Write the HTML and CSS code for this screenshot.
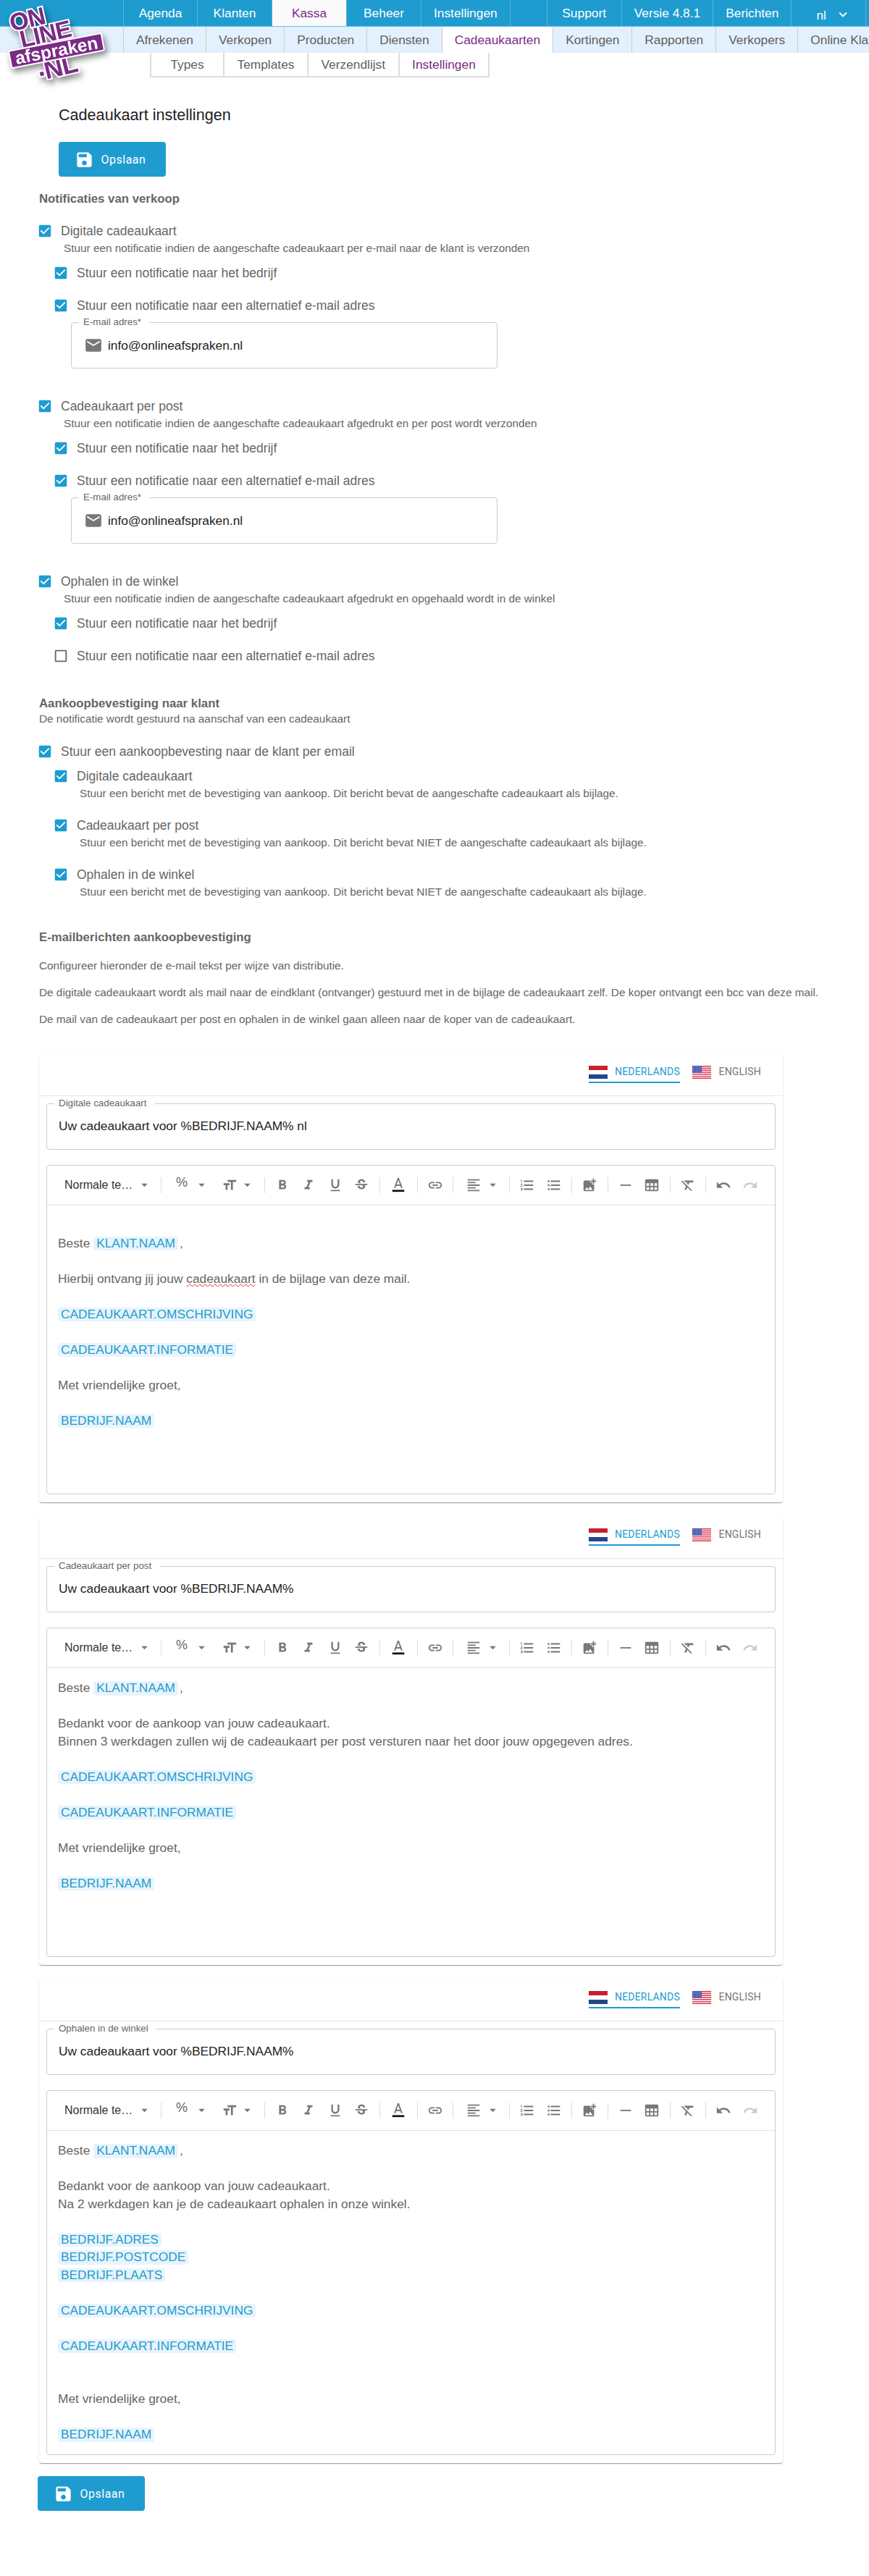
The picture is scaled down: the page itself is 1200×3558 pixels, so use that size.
FILE: index.html
```html
<!DOCTYPE html>
<html lang="nl">
<head>
  <meta charset="UTF-8">
  <title>Cadeaukaart instellingen</title>
  <link rel="stylesheet" href="styles.css">
</head>
<body>

  <!-- Icon sprite -->
  <svg class="sprite" xmlns="http://www.w3.org/2000/svg">
    <symbol id="i-save" viewBox="0 0 24 24"><path d="M17 3H5c-1.11 0-2 .9-2 2v14c0 1.1.89 2 2 2h14c1.1 0 2-.9 2-2V7l-4-4zm-5 16c-1.66 0-3-1.34-3-3s1.34-3 3-3 3 1.34 3 3-1.34 3-3 3zm3-10H5V5h10v4z"/></symbol>
    <symbol id="i-mail" viewBox="0 0 24 24"><path d="M20 4H4c-1.1 0-1.99.9-1.99 2L2 18c0 1.1.9 2 2 2h16c1.1 0 2-.9 2-2V6c0-1.1-.9-2-2-2zm0 4l-8 5-8-5V6l8 5 8-5v2z"/></symbol>
    <symbol id="i-check" viewBox="0 0 24 24"><path d="M19 3H5c-1.11 0-2 .9-2 2v14c0 1.1.89 2 2 2h14c1.1 0 2-.9 2-2V5c0-1.11-.89-2-2-2zm-9 14l-5-5 1.41-1.41L10 14.17l7.59-7.59L19 8l-9 9z"/></symbol>
    <symbol id="i-uncheck" viewBox="0 0 24 24"><path d="M19 5v14H5V5h14m0-2H5c-1.1 0-2 .9-2 2v14c0 1.1.9 2 2 2h14c1.1 0 2-.9 2-2V5c0-1.1-.9-2-2-2z"/></symbol>
    <symbol id="i-caret" viewBox="6 9 12 7"><path d="M7 10l5 5 5-5z"/></symbol>
    <symbol id="i-size" viewBox="0 0 24 24"><path d="M9 4v3h5v12h3V7h5V4H9zm-6 8h3v7h3v-7h3V9H3v3z"/></symbol>
    <symbol id="i-bold" viewBox="0 0 24 24"><path d="M15.6 10.79c.97-.67 1.65-1.77 1.65-2.79 0-2.26-1.75-4-4-4H7v14h7.04c2.09 0 3.71-1.7 3.71-3.79 0-1.52-.86-2.82-2.15-3.42zM10 6.5h3c.83 0 1.5.67 1.5 1.5s-.67 1.5-1.5 1.5h-3v-3zm3.5 9H10v-3h3.5c.83 0 1.5.67 1.5 1.5s-.67 1.5-1.5 1.5z"/></symbol>
    <symbol id="i-italic" viewBox="0 0 24 24"><path d="M10 4v3h2.21l-3.42 8H6v3h8v-3h-2.21l3.42-8H18V4z"/></symbol>
    <symbol id="i-under" viewBox="0 0 24 24"><path d="M12 17c3.31 0 6-2.69 6-6V3h-2.5v8c0 1.93-1.57 3.5-3.5 3.5S8.5 12.93 8.5 11V3H6v8c0 3.31 2.69 6 6 6zm-7 2v2h14v-2H5z"/></symbol>
    <symbol id="i-strike" viewBox="0 0 24 24"><path d="M7.24 8.75c-.26-.48-.39-1.03-.39-1.67 0-.61.13-1.16.4-1.67.26-.5.63-.93 1.11-1.29.48-.35 1.05-.63 1.7-.83.66-.19 1.39-.29 2.18-.29.81 0 1.54.11 2.21.34.66.22 1.23.54 1.69.94.47.4.83.88 1.08 1.43.25.55.38 1.15.38 1.81h-3.01c0-.31-.05-.59-.15-.85-.09-.27-.24-.49-.44-.68-.2-.19-.45-.33-.75-.44-.3-.1-.66-.16-1.06-.16-.39 0-.74.04-1.03.13-.29.09-.53.21-.72.36-.19.16-.34.34-.44.55-.1.21-.15.43-.15.66 0 .48.25.88.74 1.21.38.25.77.48 1.41.7H7.39c-.05-.08-.11-.17-.15-.25zM21 12v-2H3v2h9.62c.18.07.4.14.55.2.37.17.66.34.87.51.21.17.35.36.43.57.07.2.11.43.11.69 0 .23-.05.45-.14.66-.09.2-.23.38-.42.53-.19.15-.42.26-.71.35-.29.08-.63.13-1.01.13-.43 0-.83-.04-1.18-.13s-.66-.23-.91-.42c-.25-.19-.45-.44-.59-.75-.14-.31-.25-.76-.25-1.21H6.4c0 .55.08 1.13.24 1.58.16.45.37.85.65 1.21.28.35.6.66.98.92.37.26.78.48 1.22.65.44.17.9.3 1.38.39.48.08.96.13 1.44.13.8 0 1.53-.09 2.18-.28s1.21-.45 1.67-.79c.46-.34.82-.77 1.07-1.27s.38-1.07.38-1.71c0-.6-.1-1.14-.31-1.61-.05-.11-.11-.23-.17-.33H21z"/></symbol>
    <symbol id="i-color" viewBox="0 0 24 24"><path d="M11 1L5.5 16h2.25l1.12-3h6.25l1.12 3h2.25L13 1h-2zm-1.38 10L12 4.2l2.38 6.8H9.62z"/><path fill="#111" d="M3 19h18v3H3z"/></symbol>
    <symbol id="i-link" viewBox="0 0 24 24"><path d="M3.9 12c0-1.71 1.39-3.1 3.1-3.1h4V7H7c-2.76 0-5 2.24-5 5s2.24 5 5 5h4v-1.9H7c-1.71 0-3.1-1.39-3.1-3.1zM8 13h8v-2H8v2zm9-6h-4v1.9h4c1.71 0 3.1 1.39 3.1 3.1s-1.39 3.1-3.1 3.1h-4V17h4c2.76 0 5-2.24 5-5s-2.24-5-5-5z"/></symbol>
    <symbol id="i-align" viewBox="0 0 24 24"><path d="M15 15H3v2h12v-2zm0-8H3v2h12V7zM3 13h18v-2H3v2zm0 8h18v-2H3v2zM3 3v2h18V3H3z"/></symbol>
    <symbol id="i-ol" viewBox="0 0 24 24"><path d="M2 17h2v.5H3v1h1v.5H2v1h3v-4H2v1zm1-9h1V4H2v1h1v3zm-1 3h1.8L2 13.1v.9h3v-1H3.2L5 10.9V10H2v1zm5-6v2h14V5H7zm0 14h14v-2H7v2zm0-6h14v-2H7v2z"/></symbol>
    <symbol id="i-ul" viewBox="0 0 24 24"><path d="M4 10.5c-.83 0-1.5.67-1.5 1.5s.67 1.5 1.5 1.5 1.5-.67 1.5-1.5-.67-1.5-1.5-1.5zm0-6c-.83 0-1.5.67-1.5 1.5S3.17 7.5 4 7.5 5.5 6.83 5.5 6 4.83 4.5 4 4.5zm0 12c-.83 0-1.5.68-1.5 1.5s.68 1.5 1.5 1.5 1.5-.68 1.5-1.5-.67-1.5-1.5-1.5zM7 19h14v-2H7v2zm0-6h14v-2H7v2zm0-8v2h14V5H7z"/></symbol>
    <symbol id="i-photo" viewBox="0 0 24 24"><path d="M19 7v2.99s-1.99.01-2 0V7h-3s.01-1.99 0-2h3V2h2v3h3v2h-3zm-3 4V8h-3V5H5c-1.1 0-2 .9-2 2v12c0 1.1.9 2 2 2h12c1.1 0 2-.9 2-2v-8h-3zM5 19l3-4 2 3 3-4 4 5H5z"/></symbol>
    <symbol id="i-hr" viewBox="0 0 24 24"><path d="M4 11h16v2H4z"/></symbol>
    <symbol id="i-table" viewBox="0 0 24 24"><path d="M20 3H4c-1.1 0-2 .9-2 2v14c0 1.1.9 2 2 2h16c1.1 0 2-.9 2-2V5c0-1.1-.9-2-2-2zM8 19H4v-4h4v4zm0-6H4V9h4v4zm6 6h-4v-4h4v4zm0-6h-4V9h4v4zm6 6h-4v-4h4v4zm0-6h-4V9h4v4z"/></symbol>
    <symbol id="i-clear" viewBox="0 0 24 24"><path d="M3.27 5L2 6.27l6.97 6.97L6.5 19h3l1.57-3.66L16.73 21 18 19.73 3.55 5.27 3.27 5zM6 5v.18L8.82 8h2.4l-.72 1.68 2.1 2.1L14.21 8H20V5H6z"/></symbol>
    <symbol id="i-undo" viewBox="0 0 24 24"><path d="M12.5 8c-2.65 0-5.05.99-6.9 2.6L2 7v9h9l-3.62-3.62c1.39-1.16 3.16-1.88 5.12-1.88 3.54 0 6.55 2.31 7.6 5.5l2.37-.78C21.08 11.03 17.15 8 12.5 8z"/></symbol>
    <symbol id="i-redo" viewBox="0 0 24 24"><path d="M18.4 10.6C16.55 8.99 14.15 8 11.5 8c-4.65 0-8.58 3.03-9.96 7.22L3.9 16c1.05-3.19 4.05-5.5 7.6-5.5 1.95 0 3.73.72 5.12 1.88L13 16h9V7l-3.6 3.6z"/></symbol>
    <symbol id="f-nl" viewBox="0 0 26 18"><path fill="#c8202f" d="M0 0h26v6H0z"/><path fill="#fff" d="M0 6h26v6H0z"/><path fill="#21468b" d="M0 12h26v6H0z"/></symbol>
    <symbol id="f-us" viewBox="0 0 26 18"><path fill="#fff" d="M0 0h26v18H0z"/><path fill="#e0354e" d="M0 0h26v1.4H0zM0 2.8h26v1.4H0zM0 5.6h26v1.4H0zM0 8.3h26v1.4H0zM0 11.1h26v1.4H0zM0 13.9h26v1.4H0zM0 16.6h26V18H0z"/><path fill="#3c4fa8" d="M0 0h13v9.7H0z"/><path stroke="#b9c3ea" stroke-width="1" stroke-dasharray="1 1" d="M1 1.5h11M1 3.7h11M1 5.9h11M1 8.1h11"/></symbol>
  </svg>

  <!-- Logo -->
  <svg class="logo" viewBox="0 0 170 125" xmlns="http://www.w3.org/2000/svg">
    <g class="logo-word">
      <text transform="translate(40 38) rotate(-13)" font-size="34" letter-spacing="-1">ON</text>
      <text transform="translate(65 58) rotate(-13)" font-size="33" letter-spacing="-1">LINE</text>
      <text transform="translate(82 105) rotate(-14)" font-size="36" letter-spacing="-1"><tspan dy="-6">.</tspan><tspan dy="6">NL</tspan></text>
    </g>
    <g transform="translate(78 70) rotate(-11)">
      <rect class="logo-band" x="-65" y="-12" width="130" height="24" rx="2"/>
      <text class="logo-small" y="8" font-size="24.5">afspraken</text>
    </g>
  </svg>

  <!-- Main menu -->
  <nav class="menu menu-top">
    <a class="menu-item" href="#">Agenda</a>
    <a class="menu-item" href="#">Klanten</a>
    <a class="menu-item active" href="#">Kassa</a>
    <a class="menu-item" href="#">Beheer</a>
    <a class="menu-item" href="#">Instellingen</a>
    <span class="menu-gap"></span>
    <a class="menu-item" href="#">Support</a>
    <a class="menu-item" href="#">Versie 4.8.1</a>
    <a class="menu-item" href="#">Berichten</a>
    <a class="menu-item menu-lang" href="#">nl
      <svg viewBox="0 0 24 24"><path d="M7.41 8.59L12 13.17l4.59-4.58L18 10l-6 6-6-6 1.41-1.41z"/></svg>
    </a>
  </nav>
  <nav class="menu menu-sub">
    <a class="menu-item" href="#">Afrekenen</a>
    <a class="menu-item" href="#">Verkopen</a>
    <a class="menu-item" href="#">Producten</a>
    <a class="menu-item" href="#">Diensten</a>
    <a class="menu-item active" href="#">Cadeaukaarten</a>
    <a class="menu-item" href="#">Kortingen</a>
    <a class="menu-item" href="#">Rapporten</a>
    <a class="menu-item" href="#">Verkopers</a>
    <a class="menu-item" href="#">Online Klanten</a>
  </nav>
  <nav class="menu menu-third">
    <a class="menu-item" href="#">Types</a>
    <a class="menu-item" href="#">Templates</a>
    <a class="menu-item" href="#">Verzendlijst</a>
    <a class="menu-item active" href="#">Instellingen</a>
  </nav>

  <main class="page">
    <h1 class="page-title">Cadeaukaart instellingen</h1>
    <button class="btn-save btn-top"><svg><use href="#i-save"/></svg>Opslaan</button>

    <!-- Notificaties -->
    <h2 class="heading h-notif">Notificaties van verkoop</h2>

    <section class="notif">
      <label class="check"><svg class="box"><use href="#i-check"/></svg>Digitale cadeaukaart</label>
      <p class="desc">Stuur een notificatie indien de aangeschafte cadeaukaart per e-mail naar de klant is verzonden</p>
      <label class="check sub first"><svg class="box"><use href="#i-check"/></svg>Stuur een notificatie naar het bedrijf</label>
      <label class="check sub"><svg class="box"><use href="#i-check"/></svg>Stuur een notificatie naar een alternatief e-mail adres</label>
      <div class="field field-mail">
        <span class="field-label">E-mail adres*</span>
        <svg class="mail-icon"><use href="#i-mail"/></svg>
        <span class="field-value">info@onlineafspraken.nl</span>
      </div>
    </section>

    <section class="notif">
      <label class="check"><svg class="box"><use href="#i-check"/></svg>Cadeaukaart per post</label>
      <p class="desc">Stuur een notificatie indien de aangeschafte cadeaukaart afgedrukt en per post wordt verzonden</p>
      <label class="check sub first"><svg class="box"><use href="#i-check"/></svg>Stuur een notificatie naar het bedrijf</label>
      <label class="check sub"><svg class="box"><use href="#i-check"/></svg>Stuur een notificatie naar een alternatief e-mail adres</label>
      <div class="field field-mail">
        <span class="field-label">E-mail adres*</span>
        <svg class="mail-icon"><use href="#i-mail"/></svg>
        <span class="field-value">info@onlineafspraken.nl</span>
      </div>
    </section>

    <section class="notif">
      <label class="check"><svg class="box"><use href="#i-check"/></svg>Ophalen in de winkel</label>
      <p class="desc">Stuur een notificatie indien de aangeschafte cadeaukaart afgedrukt en opgehaald wordt in de winkel</p>
      <label class="check sub first"><svg class="box"><use href="#i-check"/></svg>Stuur een notificatie naar het bedrijf</label>
      <label class="check sub"><svg class="box off"><use href="#i-uncheck"/></svg>Stuur een notificatie naar een alternatief e-mail adres</label>
    </section>

    <!-- Aankoopbevestiging -->
    <h2 class="heading h-confirm">Aankoopbevestiging naar klant</h2>
    <p class="text">De notificatie wordt gestuurd na aanschaf van een cadeaukaart</p>

    <label class="check confirm-main"><svg class="box"><use href="#i-check"/></svg>Stuur een aankoopbevesting naar de klant per email</label>
    <div class="confirm">
      <label class="check"><svg class="box"><use href="#i-check"/></svg>Digitale cadeaukaart</label>
      <p class="desc">Stuur een bericht met de bevestiging van aankoop. Dit bericht bevat de aangeschafte cadeaukaart als bijlage.</p>
    </div>
    <div class="confirm">
      <label class="check"><svg class="box"><use href="#i-check"/></svg>Cadeaukaart per post</label>
      <p class="desc">Stuur een bericht met de bevestiging van aankoop. Dit bericht bevat NIET de aangeschafte cadeaukaart als bijlage.</p>
    </div>
    <div class="confirm">
      <label class="check"><svg class="box"><use href="#i-check"/></svg>Ophalen in de winkel</label>
      <p class="desc">Stuur een bericht met de bevestiging van aankoop. Dit bericht bevat NIET de aangeschafte cadeaukaart als bijlage.</p>
    </div>

    <!-- E-mailberichten -->
    <h2 class="heading h-mails">E-mailberichten aankoopbevestiging</h2>
    <p class="text intro">Configureer hieronder de e-mail tekst per wijze van distributie.</p>
    <p class="text intro">De digitale cadeaukaart wordt als mail naar de eindklant (ontvanger) gestuurd met in de bijlage de cadeaukaart zelf. De koper ontvangt een bcc van deze mail.</p>
    <p class="text intro">De mail van de cadeaukaart per post en ophalen in de winkel gaan alleen naar de koper van de cadeaukaart.</p>

    <!-- Card 1 -->
    <section class="card">
      <div class="tabs">
        <a class="tab active" href="#"><svg class="flag"><use href="#f-nl"/></svg>Nederlands</a>
        <a class="tab" href="#"><svg class="flag"><use href="#f-us"/></svg>English</a>
      </div>
      <div class="field field-subject">
        <span class="field-label">Digitale cadeaukaart</span>
        <span class="field-value">Uw cadeaukaart voor %BEDRIJF.NAAM% nl</span>
      </div>
      <div class="editor">
        <div class="toolbar">
          <button class="tb tb-select">Normale te…<svg class="caret"><use href="#i-caret"/></svg></button><i class="sep"></i>
          <button class="tb tb-drop tb-pct"><span class="pct">%</span><svg class="caret"><use href="#i-caret"/></svg></button>
          <button class="tb tb-drop tb-size"><svg class="ic"><use href="#i-size"/></svg><svg class="caret"><use href="#i-caret"/></svg></button><i class="sep"></i>
          <button class="tb"><svg class="ic"><use href="#i-bold"/></svg></button>
          <button class="tb"><svg class="ic"><use href="#i-italic"/></svg></button>
          <button class="tb"><svg class="ic"><use href="#i-under"/></svg></button>
          <button class="tb"><svg class="ic"><use href="#i-strike"/></svg></button><i class="sep"></i>
          <button class="tb tb-color"><svg class="ic"><use href="#i-color"/></svg></button><i class="sep"></i>
          <button class="tb"><svg class="ic"><use href="#i-link"/></svg></button><i class="sep"></i>
          <button class="tb tb-drop tb-align"><svg class="ic"><use href="#i-align"/></svg><svg class="caret"><use href="#i-caret"/></svg></button><i class="sep"></i>
          <button class="tb"><svg class="ic"><use href="#i-ol"/></svg></button>
          <button class="tb"><svg class="ic"><use href="#i-ul"/></svg></button><i class="sep"></i>
          <button class="tb"><svg class="ic"><use href="#i-photo"/></svg></button><i class="sep"></i>
          <button class="tb"><svg class="ic"><use href="#i-hr"/></svg></button>
          <button class="tb"><svg class="ic"><use href="#i-table"/></svg></button><i class="sep"></i>
          <button class="tb"><svg class="ic"><use href="#i-clear"/></svg></button><i class="sep"></i>
          <button class="tb"><svg class="ic"><use href="#i-undo"/></svg></button>
          <button class="tb"><svg class="ic dim"><use href="#i-redo"/></svg></button>
        </div>
        <div class="ed-body">
          <p><br></p>
          <p>Beste <span class="chip">KLANT.NAAM</span>,</p>
          <p><br></p>
          <p>Hierbij ontvang jij jouw <span class="spell">cadeaukaart</span> in de bijlage van deze mail.</p>
          <p><br></p>
          <p><span class="chip">CADEAUKAART.OMSCHRIJVING</span></p>
          <p><br></p>
          <p><span class="chip">CADEAUKAART.INFORMATIE</span></p>
          <p><br></p>
          <p>Met vriendelijke groet,</p>
          <p><br></p>
          <p><span class="chip">BEDRIJF.NAAM</span></p>
        </div>
      </div>
    </section>

    <!-- Card 2 -->
    <section class="card">
      <div class="tabs">
        <a class="tab active" href="#"><svg class="flag"><use href="#f-nl"/></svg>Nederlands</a>
        <a class="tab" href="#"><svg class="flag"><use href="#f-us"/></svg>English</a>
      </div>
      <div class="field field-subject">
        <span class="field-label">Cadeaukaart per post</span>
        <span class="field-value">Uw cadeaukaart voor %BEDRIJF.NAAM%</span>
      </div>
      <div class="editor">
        <div class="toolbar">
          <button class="tb tb-select">Normale te…<svg class="caret"><use href="#i-caret"/></svg></button><i class="sep"></i>
          <button class="tb tb-drop tb-pct"><span class="pct">%</span><svg class="caret"><use href="#i-caret"/></svg></button>
          <button class="tb tb-drop tb-size"><svg class="ic"><use href="#i-size"/></svg><svg class="caret"><use href="#i-caret"/></svg></button><i class="sep"></i>
          <button class="tb"><svg class="ic"><use href="#i-bold"/></svg></button>
          <button class="tb"><svg class="ic"><use href="#i-italic"/></svg></button>
          <button class="tb"><svg class="ic"><use href="#i-under"/></svg></button>
          <button class="tb"><svg class="ic"><use href="#i-strike"/></svg></button><i class="sep"></i>
          <button class="tb tb-color"><svg class="ic"><use href="#i-color"/></svg></button><i class="sep"></i>
          <button class="tb"><svg class="ic"><use href="#i-link"/></svg></button><i class="sep"></i>
          <button class="tb tb-drop tb-align"><svg class="ic"><use href="#i-align"/></svg><svg class="caret"><use href="#i-caret"/></svg></button><i class="sep"></i>
          <button class="tb"><svg class="ic"><use href="#i-ol"/></svg></button>
          <button class="tb"><svg class="ic"><use href="#i-ul"/></svg></button><i class="sep"></i>
          <button class="tb"><svg class="ic"><use href="#i-photo"/></svg></button><i class="sep"></i>
          <button class="tb"><svg class="ic"><use href="#i-hr"/></svg></button>
          <button class="tb"><svg class="ic"><use href="#i-table"/></svg></button><i class="sep"></i>
          <button class="tb"><svg class="ic"><use href="#i-clear"/></svg></button><i class="sep"></i>
          <button class="tb"><svg class="ic"><use href="#i-undo"/></svg></button>
          <button class="tb"><svg class="ic dim"><use href="#i-redo"/></svg></button>
        </div>
        <div class="ed-body">
          <p>Beste <span class="chip">KLANT.NAAM</span>,</p>
          <p><br></p>
          <p>Bedankt voor de aankoop van jouw cadeaukaart.</p>
          <p>Binnen 3 werkdagen zullen wij de cadeaukaart per post versturen naar het door jouw opgegeven adres.</p>
          <p><br></p>
          <p><span class="chip">CADEAUKAART.OMSCHRIJVING</span></p>
          <p><br></p>
          <p><span class="chip">CADEAUKAART.INFORMATIE</span></p>
          <p><br></p>
          <p>Met vriendelijke groet,</p>
          <p><br></p>
          <p><span class="chip">BEDRIJF.NAAM</span></p>
        </div>
      </div>
    </section>

    <!-- Card 3 -->
    <section class="card">
      <div class="tabs">
        <a class="tab active" href="#"><svg class="flag"><use href="#f-nl"/></svg>Nederlands</a>
        <a class="tab" href="#"><svg class="flag"><use href="#f-us"/></svg>English</a>
      </div>
      <div class="field field-subject">
        <span class="field-label">Ophalen in de winkel</span>
        <span class="field-value">Uw cadeaukaart voor %BEDRIJF.NAAM%</span>
      </div>
      <div class="editor">
        <div class="toolbar">
          <button class="tb tb-select">Normale te…<svg class="caret"><use href="#i-caret"/></svg></button><i class="sep"></i>
          <button class="tb tb-drop tb-pct"><span class="pct">%</span><svg class="caret"><use href="#i-caret"/></svg></button>
          <button class="tb tb-drop tb-size"><svg class="ic"><use href="#i-size"/></svg><svg class="caret"><use href="#i-caret"/></svg></button><i class="sep"></i>
          <button class="tb"><svg class="ic"><use href="#i-bold"/></svg></button>
          <button class="tb"><svg class="ic"><use href="#i-italic"/></svg></button>
          <button class="tb"><svg class="ic"><use href="#i-under"/></svg></button>
          <button class="tb"><svg class="ic"><use href="#i-strike"/></svg></button><i class="sep"></i>
          <button class="tb tb-color"><svg class="ic"><use href="#i-color"/></svg></button><i class="sep"></i>
          <button class="tb"><svg class="ic"><use href="#i-link"/></svg></button><i class="sep"></i>
          <button class="tb tb-drop tb-align"><svg class="ic"><use href="#i-align"/></svg><svg class="caret"><use href="#i-caret"/></svg></button><i class="sep"></i>
          <button class="tb"><svg class="ic"><use href="#i-ol"/></svg></button>
          <button class="tb"><svg class="ic"><use href="#i-ul"/></svg></button><i class="sep"></i>
          <button class="tb"><svg class="ic"><use href="#i-photo"/></svg></button><i class="sep"></i>
          <button class="tb"><svg class="ic"><use href="#i-hr"/></svg></button>
          <button class="tb"><svg class="ic"><use href="#i-table"/></svg></button><i class="sep"></i>
          <button class="tb"><svg class="ic"><use href="#i-clear"/></svg></button><i class="sep"></i>
          <button class="tb"><svg class="ic"><use href="#i-undo"/></svg></button>
          <button class="tb"><svg class="ic dim"><use href="#i-redo"/></svg></button>
        </div>
        <div class="ed-body">
          <p>Beste <span class="chip">KLANT.NAAM</span>,</p>
          <p><br></p>
          <p>Bedankt voor de aankoop van jouw cadeaukaart.</p>
          <p>Na 2 werkdagen kan je de cadeaukaart ophalen in onze winkel.</p>
          <p><br></p>
          <p><span class="chip">BEDRIJF.ADRES</span></p>
          <p><span class="chip">BEDRIJF.POSTCODE</span></p>
          <p><span class="chip">BEDRIJF.PLAATS</span></p>
          <p><br></p>
          <p><span class="chip">CADEAUKAART.OMSCHRIJVING</span></p>
          <p><br></p>
          <p><span class="chip">CADEAUKAART.INFORMATIE</span></p>
          <p><br></p>
          <p><br></p>
          <p>Met vriendelijke groet,</p>
          <p><br></p>
          <p><span class="chip">BEDRIJF.NAAM</span></p>
        </div>
      </div>
    </section>

    <button class="btn-save btn-bottom"><svg><use href="#i-save"/></svg>Opslaan</button>
  </main>

</body>
</html>
```

FILE: styles.css
```css
* {
  box-sizing: border-box;
}

body {
  margin: 0;
  font-family: 'Liberation Sans', Arial, sans-serif;
  background: #fff;
  color: #666;
  position: relative;
}

p {
  margin: 0;
}

.sprite {
  display: none;
}

/* Logo */
.logo {
  position: absolute;
  left: 0;
  top: 0;
  width: 170px;
  height: 125px;
  z-index: 5;
  filter: drop-shadow(3px 5px 4px rgba(0, 0, 0, 0.45));
}

.logo text {
  font-family: 'Liberation Sans', Arial, sans-serif;
  font-weight: bold;
  text-anchor: middle;
}

.logo-word text {
  fill: #7b2a86;
  stroke: #fff;
  stroke-width: 4px;
  paint-order: stroke;
}

.logo-band {
  fill: #7b2a86;
  stroke: #fff;
  stroke-width: 2px;
}

.logo-small {
  fill: #fff;
}

/* Menus */
.menu {
  display: flex;
  white-space: nowrap;
  overflow: hidden;
  font-size: 17.33px;
}

.menu-item {
  display: flex;
  align-items: center;
  justify-content: center;
  flex: none;
  min-width: 103px;
  padding: 0 17px;
  text-decoration: none;
  border-right: 1px solid #ccc;
}

.menu-top {
  height: 37px;
  padding-left: 170px;
  background: #1e9cd0;
  border-bottom: 1px solid #6fc0e2;
}

.menu-top .menu-item {
  color: #fff;
  border-right-color: #55b3dc;
}

.menu-top .menu-item:first-child {
  border-left: 1px solid #55b3dc;
}

.menu-top .menu-item.active {
  background: #fafafa;
  color: #7b2a86;
}

.menu-gap {
  flex: none;
  width: 51px;
  border-right: 1px solid #55b3dc;
}

.menu-lang {
  width: 103px;
  justify-content: flex-start;
  padding: 6px 0 0 34px;
  gap: 12px;
}

.menu-lang svg {
  width: 22px;
  height: 22px;
  margin-top: -3px;
  fill: #fff;
}

.menu-sub {
  height: 36px;
  padding-left: 170px;
  background: #e3f0fe;
}

.menu-sub .menu-item {
  color: #5f5f5f;
}

.menu-sub .menu-item:first-child {
  border-left: 1px solid #ccc;
}

.menu-sub .menu-item.active {
  background: #fff;
  color: #7b2a86;
}

.menu-third {
  height: 34px;
  width: 674px;
  margin-left: 207px;
}

.menu-third .menu-item {
  padding: 0 17.5px;
  color: #5f5f5f;
  border-bottom: 2px solid #ddd;
  border-right: 2px solid #ddd;
}

.menu-third .menu-item:first-child {
  border-left: 2px solid #ddd;
}

.menu-third .menu-item.active {
  color: #7b2a86;
}

/* Page */
.page {
  padding: 0 0 80px 54px;
}

.page-title {
  margin: 37px 0 0 27px;
  font-size: 21.6px;
  font-weight: normal;
  line-height: 30px;
  color: #222;
}

.btn-save {
  display: flex;
  align-items: center;
  gap: 9.5px;
  width: 148px;
  height: 48px;
  padding: 0 0 0 22px;
  border: none;
  border-radius: 4px;
  background: #1e9cd0;
  color: #fff;
  font-family: Roboto, sans-serif;
  font-size: 16px;
  letter-spacing: 0.5px;
}

.btn-save svg {
  width: 27px;
  height: 27px;
  fill: #fff;
}

.btn-top {
  margin: 22px 0 0 27px;
}

.btn-bottom {
  margin: 18px 0 0 -2px;
}

.heading {
  margin: 0;
  font-size: 16.8px;
  font-weight: bold;
  line-height: 24px;
  color: #666;
}

.h-notif {
  margin-top: 19px;
}

.h-confirm {
  margin-top: 43px;
  line-height: 22px;
}

.h-mails {
  margin-top: 41px;
}

.text {
  font-size: 15.33px;
  line-height: 20px;
}

.intro {
  margin-top: 17px;
}

/* Checkbox rows */
.check {
  display: flex;
  align-items: center;
  height: 24px;
  font-size: 17.5px;
  color: #666;
}

.box {
  flex: none;
  width: 22px;
  height: 22px;
  margin: 0 10.75px 0 -2.75px;
  fill: #1e9cd0;
}

.box.off {
  fill: #666;
}

.desc {
  margin: 2px 0 0 34px;
  font-size: 15.33px;
  line-height: 20px;
}

.notif {
  margin-top: 20px;
}

.notif + .notif {
  margin-top: 40px;
}

.check.sub {
  margin: 21px 0 0 22px;
}

.check.sub.first {
  margin-top: 12px;
}

.confirm-main {
  margin-top: 23px;
}

.confirm {
  margin: 22px 0 0 22px;
}

.confirm-main + .confirm {
  margin-top: 10px;
}

/* Outlined fields */
.field {
  position: relative;
  display: flex;
  align-items: center;
  height: 64px;
  border: 1px solid #ccc;
  border-radius: 4px;
  font-size: 17.33px;
  color: #222;
}

.field-label {
  position: absolute;
  top: -9px;
  left: 10px;
  padding: 0 11px 0 6px;
  background: #fff;
  font-size: 13.33px;
  line-height: 16px;
  color: #666;
}

.field-mail {
  width: 589px;
  margin: 11px 0 0 44px;
  padding: 0 0 0 17px;
}

.mail-icon {
  width: 26px;
  height: 26px;
  margin-right: 7px;
  fill: #777;
}

.field-subject {
  margin: 10px 10px 0;
  padding: 0 0 1px 16px;
}

/* Language cards */
.card {
  width: 1027px;
  margin-top: 37px;
  padding-bottom: 11px;
  border-radius: 4px;
  box-shadow: 0 2px 1px -1px rgba(0, 0, 0, 0.2), 0 1px 1px rgba(0, 0, 0, 0.14), 0 1px 3px rgba(0, 0, 0, 0.12);
}

.card + .card {
  margin-top: 19.5px;
}

.tabs {
  display: flex;
  justify-content: flex-end;
  gap: 17.5px;
  height: 59px;
  padding: 17px 30px 0 0;
  border-bottom: 1px solid #e6e6e6;
}

.tab {
  display: flex;
  align-items: flex-start;
  gap: 10px;
  height: 24px;
  font-family: Roboto, sans-serif;
  font-size: 14px;
  letter-spacing: 0.2px;
  line-height: 17px;
  text-transform: uppercase;
  text-decoration: none;
  color: #777;
}

.tab.active {
  color: #1e9cd0;
  border-bottom: 2px solid #1e9cd0;
}

.flag {
  width: 26px;
  height: 18px;
}

/* Editor */
.editor {
  margin: 21px 10px 0;
  border: 1px solid #ccc;
  border-radius: 4px;
}

.toolbar {
  display: flex;
  align-items: center;
  height: 55px;
  border-bottom: 1px solid #e0e0e0;
}

.tb {
  display: flex;
  align-items: center;
  justify-content: center;
  flex: none;
  width: 36.5px;
  height: 36px;
  padding: 0;
  border: none;
  background: none;
  font-family: 'Liberation Sans', Arial, sans-serif;
  font-size: 16px;
  color: #333;
}

.sep {
  flex: none;
  width: 1px;
  height: 22px;
  margin: 0 6px;
  background: #ddd;
}

.ic {
  width: 22px;
  height: 22px;
  fill: #777;
}

.ic.dim {
  fill: #ccc;
}

.caret {
  flex: none;
  width: 11px;
  height: 6px;
  fill: #777;
}

.tb-select {
  justify-content: space-between;
  width: 151px;
  padding: 0 11px 0 24px;
}

.tb-drop {
  justify-content: flex-start;
}

.tb-pct {
  width: 68px;
  padding-left: 10px;
  gap: 10px;
}

.tb-size {
  width: 61.5px;
  padding-left: 9px;
  gap: 7.5px;
}

.tb-align {
  width: 65px;
  padding-left: 11px;
  gap: 9.5px;
}

.tb-color {
  width: 39px;
}

.pct {
  width: 24px;
  padding-bottom: 7px;
  font-size: 18px;
  color: #666;
}

.ed-body {
  min-height: 397.5px;
  padding: 15px 15px 15.5px;
  font-size: 17.33px;
  line-height: 24.5px;
  color: #666;
}

.chip {
  display: inline-block;
  height: 19.5px;
  margin-right: 2px;
  padding: 0 4px;
  border-radius: 4px;
  background: #e8f4fb;
  color: #1e9cd0;
  line-height: 19.5px;
}

.spell {
  text-decoration: underline wavy #e22;
  text-decoration-thickness: 1px;
}
```
